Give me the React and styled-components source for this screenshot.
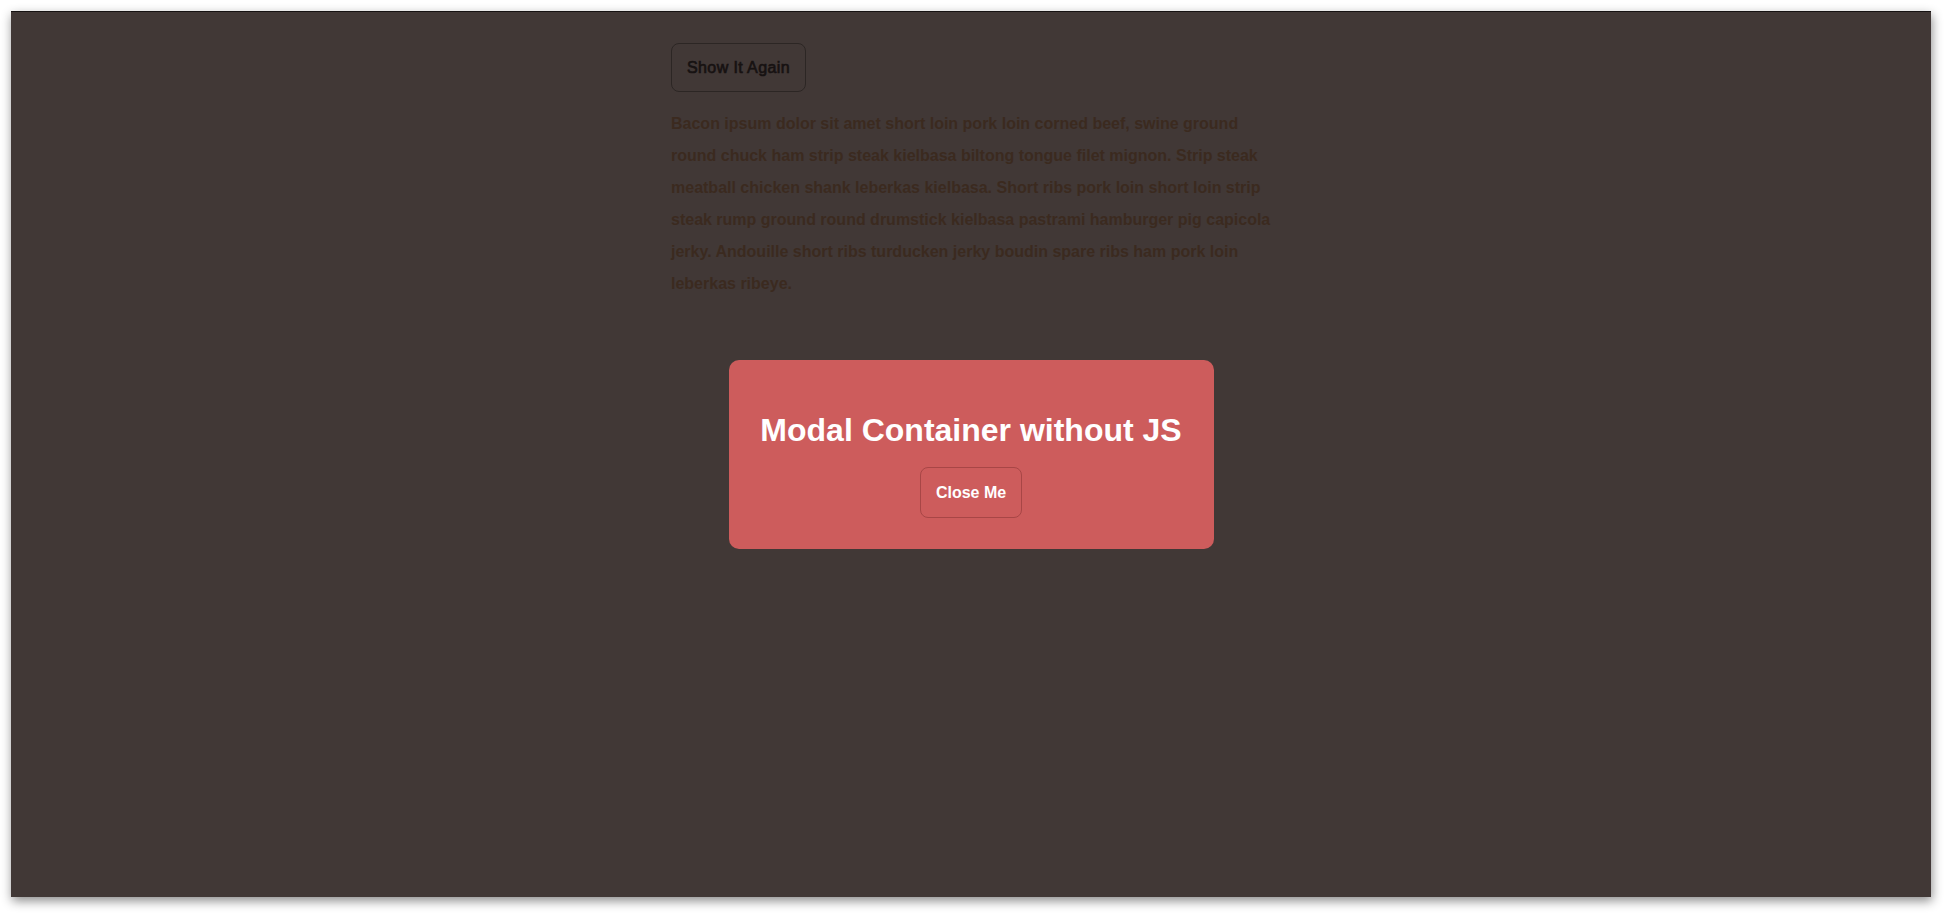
import React from "react";
import styled, { createGlobalStyle } from "styled-components";

const Global = createGlobalStyle`
  html, body {
    margin: 0;
    padding: 0;
    background: #ffffff;
  }
  body {
    font-family: "Liberation Sans", Arial, sans-serif;
  }
  * { box-sizing: border-box; }
`;

const Page = styled.div`
  width: 1950px;
  height: 916px;
  padding: 11px 19px 19px 11px;
  background: #ffffff;
`;

const Frame = styled.div`
  position: relative;
  width: 1920px;
  height: 886px;
  background: #413836;
  border-top: 1px solid #161212;
  box-shadow: 1px 4px 10px rgba(0, 0, 0, 0.45);
  padding-top: 31px;
  overflow: hidden;
`;

const Content = styled.main`
  width: 600px;
  margin: 0 auto;
`;

const GhostButton = styled.button`
  font-family: "Liberation Sans", Arial, sans-serif;
  font-size: 16px;
  font-weight: ${(p) => (p.$bold ? 700 : 400)};
  letter-spacing: ${(p) => (p.$bold ? "0" : "0.4px")};
  -webkit-text-stroke: ${(p) => (p.$bold ? "0" : "0.65px")} currentColor;
  line-height: ${(p) => (p.$bold ? "19px" : "17px")};
  color: ${(p) => p.$color};
  background: transparent;
  border: 1px solid ${(p) => p.$border};
  border-radius: 8px;
  padding: 15px;
  cursor: pointer;
  display: inline-block;
`;

const Paragraph = styled.p`
  margin: 16px 0 0;
  font-size: 16px;
  font-weight: 700;
  line-height: 32px;
  color: #3b2a1f;
`;

const Overlay = styled.div`
  position: absolute;
  inset: 0;
  display: flex;
  align-items: center;
  justify-content: center;
`;

const Modal = styled.div`
  width: 485px;
  background: #cd5c5c;
  border-radius: 10px;
  padding: 26px 32px 31px;
  display: flex;
  flex-direction: column;
  align-items: center;
  margin-top: -1px;
`;

const Title = styled.h2`
  margin: 26px 0 18px;
  font-size: 32px;
  font-weight: 700;
  line-height: 37px;
  color: #ffffff;
  text-align: center;
  white-space: nowrap;
`;

export default function App() {
  return (
    <>
      <Global />
      <Page>
        <Frame>
          <Content>
            <GhostButton $color="#171212" $border="#2c2624">
              Show It Again
            </GhostButton>
            <Paragraph>
              Bacon ipsum dolor sit amet short loin pork loin corned beef, swine
              ground round chuck ham strip steak kielbasa biltong tongue filet
              mignon. Strip steak meatball chicken shank leberkas kielbasa. Short
              ribs pork loin short loin strip steak rump ground round drumstick
              kielbasa pastrami hamburger pig capicola jerky. Andouille short ribs
              turducken jerky boudin spare ribs ham pork loin leberkas ribeye.
            </Paragraph>
          </Content>
          <Overlay>
            <Modal>
              <Title>Modal Container without JS</Title>
              <GhostButton $bold $color="#ffffff" $border="#a84646">
                Close Me
              </GhostButton>
            </Modal>
          </Overlay>
        </Frame>
      </Page>
    </>
  );
}
